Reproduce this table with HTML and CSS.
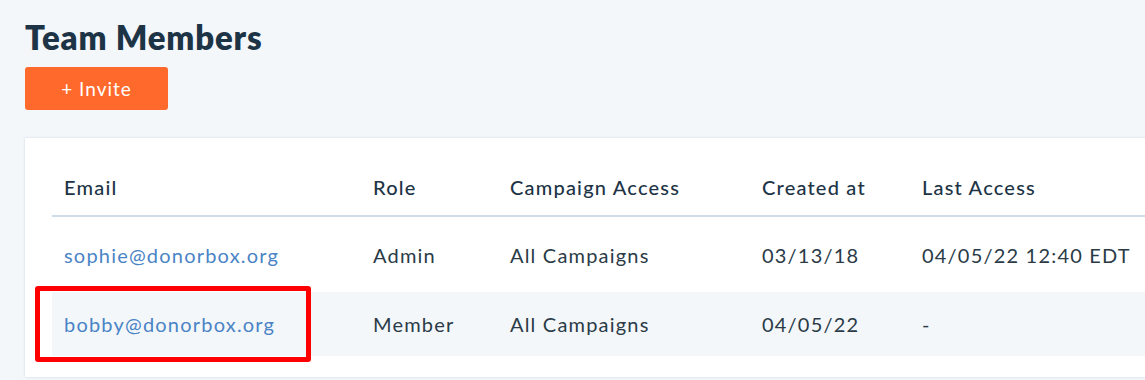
FILE: index.html
```html
<!DOCTYPE html>
<html>
<head>
<meta charset="utf-8">
<link rel="stylesheet" href="styles.css">
</head>
<body>
<div class="page">
  <h1 class="title">Team Members</h1>
  <button class="invite">+ Invite</button>
  <div class="card">
    <table class="members">
      <colgroup>
        <col class="c-email"><col class="c-role"><col class="c-access"><col class="c-created"><col class="c-last">
      </colgroup>
      <thead>
        <tr><th>Email</th><th>Role</th><th>Campaign Access</th><th>Created at</th><th>Last Access</th></tr>
      </thead>
      <tbody>
        <tr class="r1"><td><a class="mail" href="#">sophie@donorbox.org</a></td><td>Admin</td><td>All Campaigns</td><td>03/13/18</td><td>04/05/22 12:40 EDT</td></tr>
        <tr class="r2 striped"><td class="hl-cell"><a class="mail" href="#">bobby@donorbox.org</a><span class="highlight"></span></td><td>Member</td><td>All Campaigns</td><td>04/05/22</td><td>-</td></tr>
      </tbody>
    </table>
  </div>
</div>
</body>
</html>
```
FILE: styles.css
```css
html, body { margin: 0; padding: 0; }
body {
  background: #f4f7fa;
  font-family: "Lato", "Open Sans", sans-serif;
  color: #2a3b47;
  overflow: hidden;
  width: 1145px;
  height: 380px;
}
.page { padding: 17px 0 0 25px; }
.title {
  margin: 0;
  font-size: 33px;
  line-height: 40px;
  font-weight: 800;
  color: #1d3446;
  letter-spacing: 0.8px;
}
.invite {
  margin-top: 10px;
  display: block;
  width: 143px;
  height: 43px;
  border: 0;
  border-radius: 3px;
  background: #ff692b;
  color: #fff;
  font-family: inherit;
  font-size: 19px;
  letter-spacing: 1px;
  padding: 0;
}
.card {
  margin-top: 28px;
  width: 1200px;
  background: #fff;
  box-shadow: 0 0 2px rgba(160, 185, 205, 0.5);
  padding: 0 0 21px 27px;
}
.members {
  border-collapse: collapse;
  table-layout: fixed;
  width: 1173px;
  font-size: 20px;
  line-height: 24px;
  letter-spacing: 1.2px;
}
.c-email { width: 309px; }
.c-role { width: 137px; }
.c-access { width: 252px; }
.c-created { width: 160px; }
.members th {
  text-align: left;
  font-weight: 500;
  color: #1d3446;
  height: 78px;
  box-sizing: border-box;
  padding: 0 0 16px 12px;
  vertical-align: bottom;
  border-bottom: 2px solid #cfdbe5;
}
.members td {
  padding: 0 0 0 12px;
  vertical-align: middle;
  white-space: nowrap;
}
.r1 td { height: 75px; }
.r2 td { height: 64px; }
.striped td { background: #f4f7fa; }
.mail { color: #4a84c6; text-decoration: none; }
.hl-cell { position: relative; }
.highlight {
  position: absolute;
  left: -17px;
  top: -6px;
  width: 266px;
  height: 66px;
  border: 5px solid #ff0000;
  border-radius: 3px;
  pointer-events: none;
}
```
